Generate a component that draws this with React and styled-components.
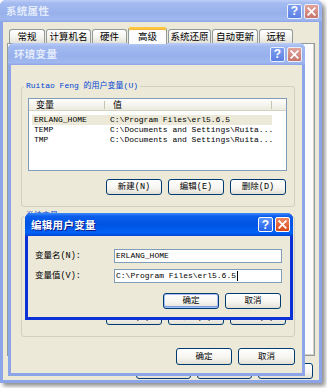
import React from "react";
import styled, { createGlobalStyle, css } from "styled-components";

const MONO = `"Liberation Mono", "Noto Sans CJK SC", monospace`;
const CJK = `"Noto Sans CJK SC", "Liberation Sans", sans-serif`;

const GlobalStyle = createGlobalStyle`
  html, body { margin: 0; padding: 0; background: #ffffff; }
  body { font-family: ${MONO}; font-size: 8px; color: #000; }
  #root { width: 327px; height: 388px; }
`;

const Desktop = styled.div`
  position: relative;
  width: 327px;
  height: 388px;
  overflow: hidden;
  background: #ffffff;
`;

const Win = styled.div`
  box-sizing: border-box;
  display: flex;
  flex-direction: column;
  width: ${(p) => p.$w}px;
  height: ${(p) => p.$h}px;
  border-radius: 6px 6px 0 0;
  background: ${(p) => (p.$active ? "#0A32D6" : "#8CA4E8")};
  ${(p) =>
    p.$shadow &&
    css`
      box-shadow: 3px 3px 4px rgba(0, 0, 0, 0.45);
    `}
  ${(p) =>
    p.$float &&
    css`
      position: absolute;
      left: ${p.$x}px;
      top: ${p.$y}px;
    `}
`;

const TitleBar = styled.div`
  flex: none;
  height: ${(p) => p.$h}px;
  display: flex;
  align-items: center;
  padding: 0 3px 0 6px;
  border-radius: 6px 6px 0 0;
  background: ${(p) =>
    p.$active
      ? "linear-gradient(180deg, #3E8CF8 0%, #0C5DEB 14%, #0054E3 50%, #0062F6 86%, #0046D2 100%)"
      : "linear-gradient(180deg, #BCCDF6 0%, #A3BAF0 16%, #97B0EC 60%, #A0B8EF 88%, #8DA5E6 100%)"};
`;

const TitleText = styled.span`
  font-family: ${CJK};
  font-size: 10.5px;
  font-weight: bold;
  line-height: 12px;
  color: ${(p) => (p.$active ? "#ffffff" : "#E4ECFB")};
  text-shadow: ${(p) => (p.$active ? "1px 1px 0 #0A1883" : "none")};
  letter-spacing: 0.3px;
`;

const CapButtons = styled.div`
  margin-left: auto;
  display: flex;
  gap: 2px;
`;

const capBg = {
  help: "linear-gradient(180deg, #7E9EF0 0%, #5C80E3 100%)",
  close: "linear-gradient(180deg, #E2A39A 0%, #C8756C 100%)",
  helpA: "linear-gradient(180deg, #5C94FF 0%, #2562E8 100%)",
  closeA: "linear-gradient(180deg, #EE8A63 0%, #D9461B 100%)",
};

const CapButton = styled.div`
  box-sizing: border-box;
  width: 15px;
  height: 15px;
  border: 1px solid ${(p) => (p.$active ? "#ffffff" : "#E9EEFB")};
  border-radius: 2px;
  display: flex;
  align-items: center;
  justify-content: center;
  background: ${(p) => capBg[p.$kind + (p.$active ? "A" : "")]};
  color: #ffffff;
  font-family: "Liberation Sans", sans-serif;
  font-weight: bold;
  font-size: 12px;
  line-height: 12px;
`;

const CloseGlyph = () => (
  <svg width="9" height="9" viewBox="0 0 9 9">
    <path d="M1.2 1.2 L7.8 7.8 M7.8 1.2 L1.2 7.8" stroke="#ffffff" strokeWidth="1.8" strokeLinecap="square" />
  </svg>
);

const Caption = ({ title, active, h }) => (
  <TitleBar $active={active} $h={h}>
    <TitleText $active={active}>{title}</TitleText>
    <CapButtons>
      <CapButton $kind="help" $active={active}>?</CapButton>
      <CapButton $kind="close" $active={active}>
        <CloseGlyph />
      </CapButton>
    </CapButtons>
  </TitleBar>
);

const Body = styled.div`
  flex: 1;
  display: flex;
  flex-direction: column;
  margin: 0 3px 3px;
  background: #ECE9D8;
  padding: ${(p) => p.$pad};
  min-height: 0;
`;

/* ---------- tabs ---------- */
const TabStrip = styled.div`
  display: flex;
  align-items: flex-end;
  gap: 1px;
  height: 16px;
  padding-left: 2px;
`;

const Tab = styled.div`
  box-sizing: border-box;
  width: ${(p) => p.$w}px;
  height: ${(p) => (p.$sel ? 17 : 14)}px;
  margin-bottom: ${(p) => (p.$sel ? -1 : 0)}px;
  border: 1px solid #919B9C;
  border-bottom: none;
  border-radius: 3px 3px 0 0;
  display: flex;
  align-items: center;
  justify-content: center;
  font-family: ${CJK};
  font-size: 9.5px;
  line-height: 11px;
  position: relative;
  z-index: ${(p) => (p.$sel ? 1 : 0)};
  background: ${(p) =>
    p.$sel ? "#FCFCFE" : "linear-gradient(180deg, #FFFFFF 0%, #F4F3EE 55%, #E4E2D7 100%)"};
  ${(p) =>
    p.$sel &&
    css`
      border-top: 2px solid #FFC73C;
      box-shadow: inset 0 1px 0 #F7B43A;
    `}
`;

const TabPanel = styled.div`
  box-sizing: border-box;
  height: 313px;
  background: #FCFCFE;
  border: 1px solid #919B9C;
  box-shadow: inset -1px -1px 0 #D4D0C8;
`;

/* ---------- buttons ---------- */
const ButtonRow = styled.div`
  display: flex;
  justify-content: flex-end;
  gap: 6px;
  margin-top: ${(p) => p.$mt}px;
  padding-right: ${(p) => p.$pr || 0}px;
`;

const Button = styled.div`
  box-sizing: border-box;
  width: ${(p) => p.$w || 56}px;
  height: ${(p) => p.$h || 16}px;
  border: 1px solid #003C74;
  border-radius: 3px;
  display: flex;
  align-items: center;
  justify-content: center;
  background: linear-gradient(180deg, #FFFFFF 0%, #F5F4EF 60%, #E3DFD4 100%);
  font-family: ${MONO};
  font-size: 8.5px;
  line-height: 10px;
  white-space: nowrap;
  ${(p) =>
    p.$default &&
    css`
      box-shadow: inset 0 0 0 1px #A4BDF3, inset 0 -1px 0 1px #7B9EE2;
    `}
`;

/* ---------- group boxes & list ---------- */
const Group = styled.fieldset`
  box-sizing: border-box;
  margin: ${(p) => p.$mt || 0}px 0 0 0;
  padding: 7px 7px 11px 6px;
  border: 1px solid #D0D0BF;
  border-radius: 3px;
  min-width: 0;
`;

const Legend = styled.legend`
  margin-left: -4px;
  padding: 0 2px;
  font-family: ${MONO};
  font-size: 8px;
  line-height: 10px;
  color: #0046D5;
`;

const ListView = styled.div`
  box-sizing: border-box;
  height: 73px;
  border: 1px solid #7F9DB9;
  background: #ffffff;
  display: flex;
  flex-direction: column;
  overflow: hidden;
`;

const Header = styled.div`
  flex: none;
  display: flex;
  height: 12px;
  background: linear-gradient(180deg, #FFFFFF 0%, #F2F1EA 60%, #EBEADB 100%);
  box-shadow: inset 0 -1px 0 #D6D2C2;
`;

const HeadCell = styled.div`
  box-sizing: border-box;
  width: ${(p) => (p.$w ? p.$w + "px" : "auto")};
  flex: ${(p) => (p.$w ? "none" : 1)};
  padding-left: ${(p) => p.$pl || 0}px;
  font-family: ${CJK};
  font-size: 9px;
  line-height: 12px;
  background: ${(p) =>
    p.$w ? "linear-gradient(#C7C5B2, #C7C5B2) right 2px / 1px 8px no-repeat" : "none"};
`;

const Rows = styled.div`
  padding: 4px 0 0 3px;
  display: flex;
  flex-direction: column;
`;

const Row = styled.div`
  display: flex;
  width: 240px;
  height: 10px;
  background: ${(p) => (p.$sel ? "#ECE9D8" : "transparent")};
`;

const Cell = styled.div`
  box-sizing: border-box;
  width: ${(p) => p.$w}px;
  padding-left: ${(p) => p.$pl}px;
  font-family: ${MONO};
  font-size: 8px;
  line-height: 10px;
  white-space: nowrap;
`;

const VarList = ({ rows, showHead = true }) => (
  <ListView>
    <Header>
      <HeadCell $w={76} $pl={7}>{showHead ? "变量" : ""}</HeadCell>
      <HeadCell $w={167} $pl={8}>{showHead ? "值" : ""}</HeadCell>
      <HeadCell />
    </Header>
    <Rows>
      {rows.map((r, i) => (
        <Row key={r[0]} $sel={i === 0 && r[2]}>
          <Cell $w={73} $pl={2}>{r[0]}</Cell>
          <Cell $w={167} $pl={5}>{r[1]}</Cell>
        </Row>
      ))}
    </Rows>
  </ListView>
);

/* ---------- edit form ---------- */
const Form = styled.div`
  display: flex;
  flex-direction: column;
  gap: 6px;
`;

const FormRow = styled.div`
  display: flex;
  align-items: center;
  height: 14px;
`;

const Label = styled.div`
  flex: 1;
  font-family: ${MONO};
  font-size: 8.5px;
  line-height: 10px;
`;

const TextBox = styled.div`
  box-sizing: border-box;
  width: 168px;
  height: 14px;
  border: 1px solid #7F9DB9;
  background: #ffffff;
  padding-left: 1px;
  display: flex;
  align-items: center;
  font-family: ${MONO};
  font-size: 8px;
  line-height: 10px;
  white-space: nowrap;
`;

const Caret = styled.span`
  display: inline-block;
  width: 1px;
  height: 10px;
  background: #000;
  margin-left: 1px;
`;

const userRows = [
  ["ERLANG_HOME", "C:\\Program Files\\erl5.6.5", true],
  ["TEMP", "C:\\Documents and Settings\\Ruita..."],
  ["TMP", "C:\\Documents and Settings\\Ruita..."],
];

export default function App() {
  return (
    <>
      <GlobalStyle />
      <Desktop>
        {/* 系统属性 */}
        <Win $w={322} $h={383} $shadow>
          <Caption title="系统属性" h={22} />
          <Body $pad="5px 4px 0 4px">
            <TabStrip>
              <Tab $w={36}>常规</Tab>
              <Tab $w={45}>计算机名</Tab>
              <Tab $w={35}>硬件</Tab>
              <Tab $w={39} $sel>高级</Tab>
              <Tab $w={43}>系统还原</Tab>
              <Tab $w={46}>自动更新</Tab>
              <Tab $w={34}>远程</Tab>
            </TabStrip>
            <TabPanel />
            <ButtonRow $mt={7} $pr={2}>
              <Button $w={55}>确定</Button>
              <Button $w={55}>取消</Button>
              <Button $w={55}>应用(A)</Button>
            </ButtonRow>
          </Body>
        </Win>

        {/* 环境变量 */}
        <Win $float $x={8} $y={43} $w={297} $h={333}>
          <Caption title="环境变量" h={22} />
          <Body $pad="16px 7px 0 10px">
            <Group>
              <Legend>Ruitao Feng 的用户变量(U)</Legend>
              <VarList rows={userRows} />
              <ButtonRow $mt={8} $pr={1}>
                <Button>新建(N)</Button>
                <Button>编辑(E)</Button>
                <Button>删除(D)</Button>
              </ButtonRow>
            </Group>
            <Group $mt={4}>
              <Legend>系统变量(S)</Legend>
              <VarList rows={[]} showHead={false} />
              <ButtonRow $mt={8} $pr={1}>
                <Button>新建(W)</Button>
                <Button>编辑(I)</Button>
                <Button>删除(L)</Button>
              </ButtonRow>
            </Group>
            <ButtonRow $mt={11}>
              <Button $w={56} $h={17}>确定</Button>
              <Button $w={57} $h={17}>取消</Button>
            </ButtonRow>
          </Body>
        </Win>

        {/* 编辑用户变量 */}
        <Win $float $active $x={25} $y={213} $w={268} $h={107}>
          <Caption title="编辑用户变量" active h={23} />
          <Body $pad="13px 8px 0 7px">
            <Form>
              <FormRow>
                <Label>变量名(N):</Label>
                <TextBox>ERLANG_HOME</TextBox>
              </FormRow>
              <FormRow>
                <Label>变量值(V):</Label>
                <TextBox>
                  C:\Program Files\erl5.6.5
                  <Caret />
                </TextBox>
              </FormRow>
            </Form>
            <ButtonRow $mt={10} $pr={1}>
              <Button $default>确定</Button>
              <Button>取消</Button>
            </ButtonRow>
          </Body>
        </Win>
      </Desktop>
    </>
  );
}
